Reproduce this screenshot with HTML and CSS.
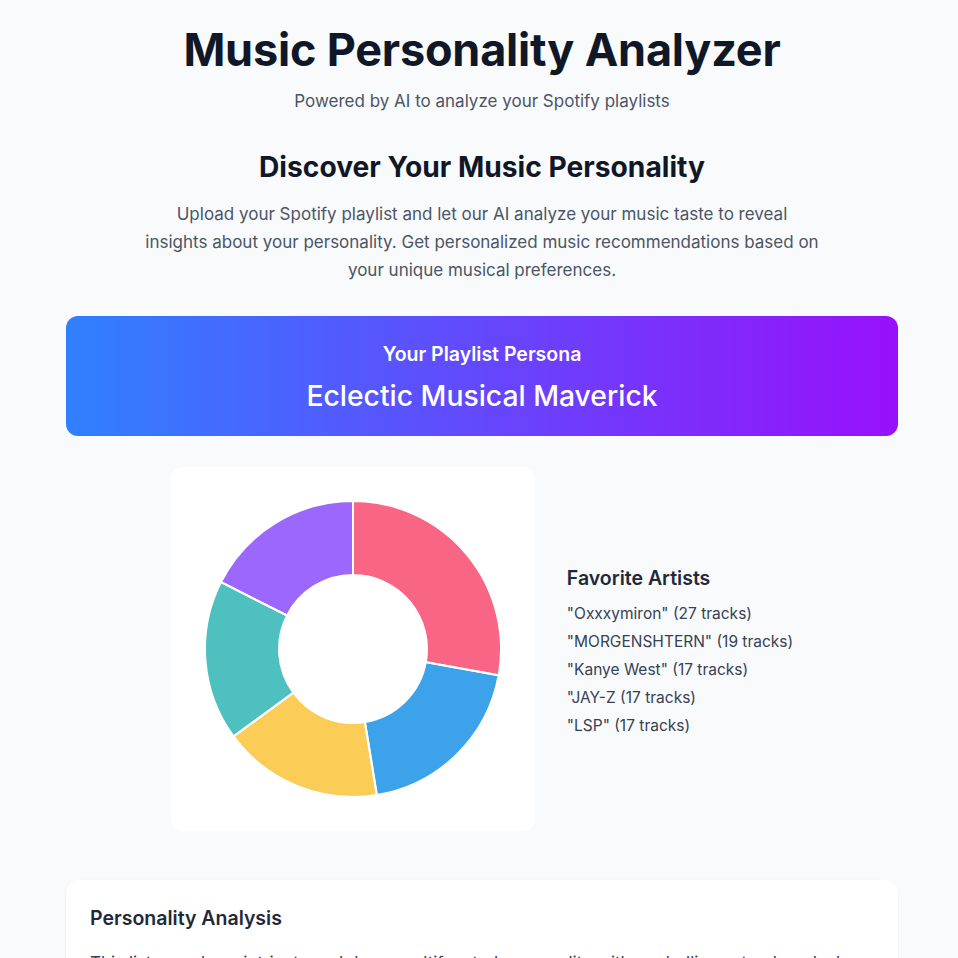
FILE: index.html
```html
<!DOCTYPE html>
<html lang="en">
<head>
<meta charset="utf-8">
<title>Music Personality Analyzer</title>
<link rel="stylesheet" href="styles.css">
</head>
<body>
<main class="container">
  <header class="hero">
    <h1 class="title">Music Personality Analyzer</h1>
    <p class="subtitle">Powered by AI to analyze your Spotify playlists</p>
  </header>

  <section class="intro">
    <h2 class="intro-title">Discover Your Music Personality</h2>
    <p class="intro-text">Upload your Spotify playlist and let our AI analyze your music taste to reveal insights about your personality. Get personalized music recommendations based on your unique musical preferences.</p>
  </section>

  <section class="persona">
    <h3 class="persona-label">Your Playlist Persona</h3>
    <p class="persona-name">Eclectic Musical Maverick</p>
  </section>

  <section class="stats">
    <div class="chart-card">
      <svg class="donut" width="300" height="300" viewBox="0 0 300 300">
        <path d="M150 2 A148 148 0 0 1 295.66 176.23 L222.83 163.11 A74 74 0 0 0 150 76 Z" fill="#f96584"/>
        <path d="M295.66 176.23 A148 148 0 0 1 173.86 296.06 L161.93 223.03 A74 74 0 0 0 222.83 163.11 Z" fill="#3ca2ea"/>
        <path d="M173.86 296.06 A148 148 0 0 1 30.56 237.40 L90.28 193.70 A74 74 0 0 0 161.93 223.03 Z" fill="#fbcd57"/>
        <path d="M30.56 237.40 A148 148 0 0 1 18.02 83.02 L84.01 116.51 A74 74 0 0 0 90.28 193.70 Z" fill="#4ec0c0"/>
        <path d="M18.02 83.02 A148 148 0 0 1 150 2 L150 76 A74 74 0 0 0 84.01 116.51 Z" fill="#9c67fd"/>
        <g fill="none" stroke="#ffffff" stroke-width="2">
          <path d="M150 2 A148 148 0 0 1 295.66 176.23 L222.83 163.11 A74 74 0 0 0 150 76 Z"/>
          <path d="M295.66 176.23 A148 148 0 0 1 173.86 296.06 L161.93 223.03 A74 74 0 0 0 222.83 163.11 Z"/>
          <path d="M173.86 296.06 A148 148 0 0 1 30.56 237.40 L90.28 193.70 A74 74 0 0 0 161.93 223.03 Z"/>
          <path d="M30.56 237.40 A148 148 0 0 1 18.02 83.02 L84.01 116.51 A74 74 0 0 0 90.28 193.70 Z"/>
          <path d="M18.02 83.02 A148 148 0 0 1 150 2 L150 76 A74 74 0 0 0 84.01 116.51 Z"/>
        </g>
      </svg>
    </div>
    <div class="artists">
      <h3 class="artists-title">Favorite Artists</h3>
      <ul class="artist-list">
        <li>"Oxxxymiron" (27 tracks)</li>
        <li>"MORGENSHTERN" (19 tracks)</li>
        <li>"Kanye West" (17 tracks)</li>
        <li>"JAY-Z (17 tracks)</li>
        <li>"LSP" (17 tracks)</li>
      </ul>
    </div>
  </section>

  <section class="analysis">
    <h3 class="analysis-title">Personality Analysis</h3>
    <p class="analysis-text">This list reveals an intricate and deep, multifaceted personality with a rebellious streak and a love for storytelling, bold energy and emotional depth across genres.</p>
  </section>
</main>
</body>
</html>
```

FILE: styles.css
```css
* { box-sizing: border-box; }

body {
  margin: 0;
  background: #f9fafb;
  font-family: Inter, "Noto Sans", sans-serif;
  color: #101828;
}

.container {
  max-width: 870px;
  margin: 0 auto;
  padding: 26px 16px 40px 22px;
}

.hero {
  text-align: center;
}

.title {
  margin: 0;
  font-size: 45px;
  line-height: 48px;
  font-weight: 700;
  letter-spacing: -0.2px;
  color: #101828;
}

.subtitle {
  margin: 15px 0 0;
  font-size: 17px;
  line-height: 24px;
  color: #4a5565;
}

.intro {
  text-align: center;
  margin-top: 36px;
}

.intro-title {
  margin: 0;
  font-size: 28.2px;
  line-height: 36px;
  font-weight: 700;
  color: #101828;
}

.intro-text {
  max-width: 674px;
  margin: 15px auto 0;
  font-size: 17px;
  line-height: 28px;
  color: #4a5565;
}

.persona {
  margin-top: 32px;
  height: 120px;
  border-radius: 12px;
  background: linear-gradient(to right, #2f80ff, #9810fa);
  color: #ffffff;
  text-align: center;
  padding: 24px 24px;
}

.persona-label {
  margin: 0;
  font-size: 19.5px;
  line-height: 28px;
  font-weight: 600;
}

.persona-name {
  margin: 10px 0 0;
  font-size: 28.3px;
  line-height: 36px;
  font-weight: 500;
}

.stats {
  margin-top: 31px;
  display: flex;
  justify-content: center;
  align-items: center;
  gap: 32px;
}

.chart-card {
  background: #ffffff;
  border-radius: 12px;
  padding: 32px;
  width: 364px;
  height: 364px;
}

.donut {
  display: block;
}

.artists {
  padding-top: 4px;
}

.artists-title {
  margin: 0;
  font-size: 19.5px;
  line-height: 28px;
  font-weight: 600;
  color: #1e2939;
}

.artist-list {
  list-style: none;
  margin: 10px 0 0;
  padding: 0;
  display: flex;
  flex-direction: column;
  gap: 4px;
}

.artist-list li {
  font-size: 15.5px;
  line-height: 24px;
  color: #364153;
}

.analysis {
  margin-top: 49px;
  background: #ffffff;
  border-radius: 12px;
  box-shadow: 0 1px 3px rgba(0, 0, 0, 0.06), 0 1px 2px rgba(0, 0, 0, 0.04);
  padding: 24px;
}

.analysis-title {
  margin: 0;
  font-size: 19.5px;
  line-height: 28px;
  font-weight: 600;
  color: #1e2939;
}

.analysis-text {
  margin: 17px 0 0;
  font-size: 17px;
  line-height: 28px;
  color: #364153;
}
```
